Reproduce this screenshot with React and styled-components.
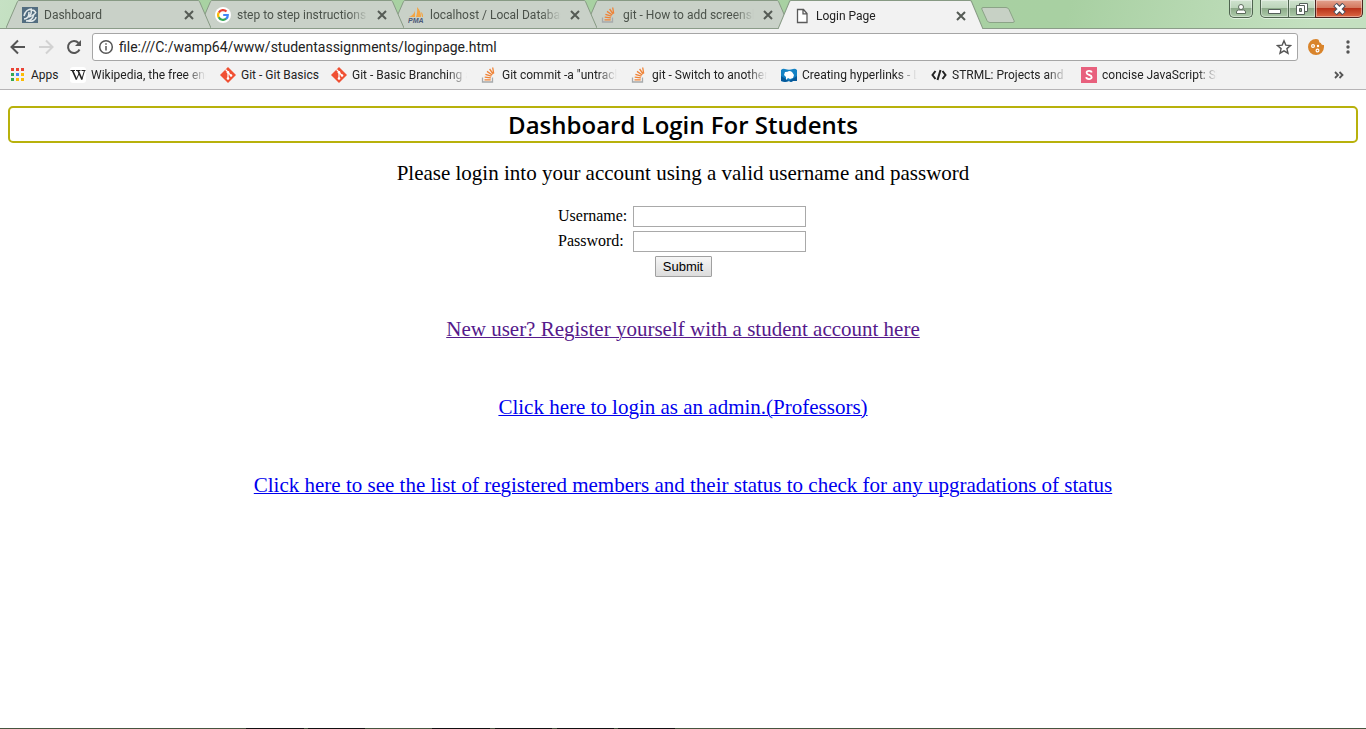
import React from "react";
import styled, { createGlobalStyle, css } from "styled-components";

const Global = createGlobalStyle`
  *, *::before, *::after { box-sizing: border-box; }
  body { margin: 0; background: #fff; }
  button { font: inherit; color: inherit; padding: 0; border: 0; background: none; }
`;

const Screen = styled.div`
  min-height: 100vh;
  display: flex;
  flex-direction: column;
  font: 12px/16px Roboto, sans-serif;
  color: #222;
`;

/* ---------- tab strip ---------- */
const TabStrip = styled.header`
  display: flex;
  justify-content: space-between;
  height: 29px;
  padding-left: 6px;
  border-bottom: 1px solid #8b9c89;
  background: linear-gradient(105deg, #c6e1c4 0, #a8d2a2 190px, #a8d0a2 78%, #c4e0c0 96%);
`;
const Tabs = styled.nav`
  display: flex;
  flex: 0 1 1040px;
  min-width: 0;
`;
const TabBox = styled.div`
  position: relative;
  z-index: ${(p) => p.$z};
  flex: 0 1 205px;
  min-width: 0;
  height: ${(p) => (p.$active ? 29 : 28)}px;
  margin-right: -12px;
  display: flex;
  color: ${(p) => (p.$active ? "#222" : "#4b524a")};
  --fill: ${(p) => (p.$active ? "#f2f2f2" : "#c9d1c8")};
`;
const TabEdge = styled.svg`
  flex: none;
  width: 13px;
  height: 100%;
  fill: var(--fill);
`;
const TabBody = styled.div`
  flex: 1;
  min-width: 0;
  display: flex;
  align-items: center;
  padding: 1px 4px 0 3px;
  background: var(--fill);
  border-top: 1px solid #879a84;
`;
const TabTitle = styled.a`
  flex: 1;
  min-width: 0;
  margin-left: 6px;
  overflow: hidden;
  white-space: nowrap;
  color: inherit;
  text-decoration: none;
  mask-image: linear-gradient(to left, transparent 0, #000 20px);
`;
const TabClose = styled.button`
  display: flex;
  width: 10px;
  margin-left: 9px;
  svg { width: 10px; height: 10px; stroke: #555b55; stroke-width: 2; }
`;
const NewTab = styled.button`
  display: flex;
  flex: none;
  margin: 6px 0 0 9px;
  svg { width: 36px; height: 18px; fill: #c7d1c5; stroke: #8ba387; }
`;
const WindowButtons = styled.div`
  display: flex;
  flex: none;
  height: 18px;
  padding-right: 3px;
`;
const winLook = css`
  display: flex;
  align-items: center;
  justify-content: center;
  height: 18px;
  border: 1px solid #4f6450;
  border-top: 0;
  box-shadow: inset 0 0 0 1px #ffffff66, 0 1px 0 #e0f0de;
  background: linear-gradient(#d0e3cf 0, #bdd5bb 45%, #8eac8b 50%, #adcba9 100%);
`;
const WinButton = styled.button`
  ${winLook}
  width: ${(p) => p.$w}px;
  margin-left: ${(p) => (p.$apart ? 0 : -1)}px;
  border-radius: ${(p) => p.$r};
  ${(p) => p.$apart && css`margin-right: 8px;`}
  ${(p) =>
    p.$danger &&
    css`
      border-color: #4d2420;
      background: linear-gradient(#e3a38f 0, #d4795f 45%, #b9331a 50%, #dc6844 100%);
    `}
`;

/* ---------- address bar ---------- */
const AddressRow = styled.div`
  display: flex;
  align-items: center;
  height: 36px;
  padding: 0 10px;
  background: #f2f2f2;
`;
const IconButton = styled.button`
  display: flex;
  flex: none;
  margin-left: ${(p) => p.$before || 0}px;
  margin-right: ${(p) => p.$gap || 0}px;
`;
const UrlBox = styled.div`
  display: flex;
  align-items: center;
  flex: 1;
  min-width: 0;
  height: 28px;
  padding: 0 5px;
  border: 1px solid #a6a6a6;
  border-radius: 3px;
  background: #fff;
`;
const UrlInput = styled.input`
  flex: 1;
  min-width: 0;
  margin-left: 5px;
  padding: 0;
  border: 0;
  outline: 0;
  background: none;
  font: 14px/20px Roboto, sans-serif;
  color: #222;
`;

/* ---------- bookmarks ---------- */
const BookmarkBar = styled.nav`
  display: flex;
  align-items: center;
  gap: 14px;
  height: 25px;
  padding: 0 22px 4px 10px;
  border-bottom: 1px solid #b6b4b6;
  background: #f2f2f2;
`;
const Bookmark = styled.a`
  display: flex;
  align-items: center;
  gap: 5px;
  color: #222;
  text-decoration: none;
  white-space: nowrap;
  svg { flex: none; }
`;
const BookmarkLabel = styled.span`
  width: ${(p) => p.$w}px;
  ${(p) =>
    p.$w > 100 &&
    css`
      overflow: hidden;
      mask-image: linear-gradient(to left, transparent 0, #000 20px);
    `}
`;
const More = styled.button`
  display: flex;
  margin-left: auto;
`;

/* ---------- page ---------- */
const Page = styled.main`
  flex: 1;
  display: flex;
  flex-direction: column;
  align-items: center;
  padding: 16px 8px;
  font: 16px/19px "Liberation Serif", serif;
  color: #000;
`;
const Heading = styled.h1`
  align-self: stretch;
  margin: 0 0 18px;
  border: 2px solid #b8b10c;
  border-radius: 5px;
  font: 600 24px/33px "Comic Sans MS", "Open Sans", sans-serif;
  text-align: center;
`;
const Intro = styled.p`
  margin: 0 0 21px;
  font-size: 21px;
  line-height: 24px;
`;
const Form = styled.form`
  display: flex;
  flex-direction: column;
  align-items: center;
  gap: 4px;
  margin-bottom: 40px;
`;
const Field = styled.div`
  display: grid;
  grid-template-columns: 75px 175px;
  align-items: center;
`;
const Label = styled.label`
  padding-bottom: 2px;
`;
const TextInput = styled.input`
  width: 173px;
  height: 21px;
  padding: 1px 2px;
  border: 1px solid #a9a9a9;
  border-radius: 0;
  font: 13px "Liberation Sans", sans-serif;
`;
const Submit = styled.button`
  && {
    width: 57px;
    height: 21px;
    border: 1px solid #a0a0a0;
    border-radius: 1px;
    background: linear-gradient(#f6f6f6, #dcdcdc);
    font: 13px/17px "Liberation Sans", sans-serif;
  }
`;
const PageLink = styled.a`
  margin-bottom: 54px;
  font-size: 21px;
  line-height: 24px;
  color: ${(p) => (p.$visited ? "#551a8b" : "#0000ee")};
  text-decoration: underline;
  text-decoration-thickness: 1px;
`;
const TaskbarEdge = styled.footer`
  height: 1px;
  background: linear-gradient(
    90deg,
    #46553f 246px, #111 246px 304px, #46553f 304px 308px, #111 308px 365px,
    #46553f 365px 432px, #111 432px 490px, #46553f 490px 495px, #111 495px 552px,
    #46553f 552px 557px, #111 557px 614px, #46553f 614px 618px, #111 618px 675px, #46553f 675px
  );
`;

/* ---------- drawings ---------- */
const Cross = () => (
  <svg viewBox="0 0 10 10"><path d="M1 1l8 8M9 1L1 9" /></svg>
);
const Drawing = styled.svg`
  flex: none;
  width: 16px;
  height: 16px;
`;
const Icon = ({ children, ...rest }) => (
  <Drawing viewBox="0 0 16 16" fill="none" {...rest}>{children}</Drawing>
);
const DashIcon = () => (
  <Icon>
    <path fill="#526d80" d="M0 0h16v16H0z" />
    <g stroke="#e2e9ea" strokeWidth="1.5">
      <path d="M2 9c1-4 4-7 8-7M2 12c4 0 5-3 5-7M4 14c4 0 7-3 8-7M7 10c3-1 6-3 7-5M6 14c4 1 8-1 8-4M9 2c1 3 0 6-3 8M10 3c2 0 3 1 4 3" />
    </g>
  </Icon>
);
const GoogleIcon = () => (
  <Icon>
    <circle cx="8" cy="8" r="8" fill="#fff" />
    <g strokeWidth="2.2">
      <path stroke="#ea4335" d="M3.8 5.6A4.8 4.8 0 0 1 11.5 4.6" />
      <path stroke="#fbbc05" d="M3.8 5.5a4.8 4.8 0 0 0 0 5" />
      <path stroke="#34a853" d="M3.7 10.2a4.8 4.8 0 0 0 7.4 1.5" />
      <path stroke="#4285f4" d="M8.2 8h4.6c.1 1.5-.6 2.9-1.8 3.9" />
    </g>
  </Icon>
);
const PmaIcon = () => (
  <Icon>
    <path fill="#f3a544" d="M7 1C7.5 4 6 8 1 10h6zM9 0c3 3 4 6 4 10H8c1-3 1.500-6 1-10zM13 5c2 1 2 3 2 5h-1z" />
    <text x="0" y="16" fill="#4c5878" fontFamily="Liberation Sans" fontWeight="700" fontStyle="italic" fontSize="7">PMA</text>
  </Icon>
);
const StackIcon = () => (
  <Icon>
    <path stroke="#a7a9ab" strokeWidth="1.3" d="M1.500 10.500v4.500h10v-4.500" />
    <path stroke="#ef8236" strokeWidth="1.3" d="M3.500 12.800h6.200M3.700 10.200l6.200.7M4.400 7.300l6 1.900M6 4.400l5.200 3.600M8.600 2l3.600 5M11.700.500l1 6" />
  </Icon>
);
const FileIcon = () => (
  <Icon stroke="#5a5a5a" strokeWidth="1.3">
    <path fill="#fff" d="M3.500 1.500h6l3.500 4v9h-9.500zM9 1.500v4.300h4" />
  </Icon>
);
const AppsIcon = () => (
  <Icon>
    {["#ea4335", "#ea4335", "#ea4335", "#34a853", "#4285f4", "#fbbc05", "#34a853", "#fbbc05", "#fbbc05"].map((c, i) => (
      <rect key={i} x={1 + (i % 3) * 5} y={1 + Math.floor(i / 3) * 5} width="3" height="3" fill={c} />
    ))}
  </Icon>
);
const WikiIcon = () => (
  <Icon>
    <rect width="16" height="16" rx="3" fill="#fff" />
    <path stroke="#222" d="M.5 3.500h4.500M6 3.500h4.500M11.500 3.500h4" />
    <path stroke="#222" strokeWidth="1.700" d="M2.500 3.500l4 9M8 3.500l4 9" />
    <path stroke="#222" strokeWidth="1" d="M6.300 12.500l3-6.500M11.800 12.500l2.700-9" />
  </Icon>
);
const GitIcon = () => (
  <Icon>
    <path fill="#f05033" d="M8 0l8 8-8 8-8-8z" />
    <path stroke="#fff" strokeWidth="1.2" d="M5.500 2.500L8 5v6.500M8 5.500L11 8.500" />
    <g fill="#fff"><circle cx="8" cy="5.200" r="1.300" /><circle cx="8" cy="11.500" r="1.300" /><circle cx="11" cy="8.500" r="1.300" /></g>
  </Icon>
);
const LinkSiteIcon = () => (
  <Icon>
    <path fill="#1482c4" d="M0 3q2-2 4-1 4 1.500 8 0 2-1 4 1v11h-4l-2 1-2-1-4 1-4-1z" />
    <path fill="#06599a" d="M0 9l8 5 8-5v5h-4l-2 1-2-1-4 1-4-1z" />
    <path fill="#fff" d="M4 5q3 0 4-1 2 0 3 1l2 3-1 3-3 1-2-1-2 2v-3l-2-2z" />
  </Icon>
);
const CodeIcon = () => (
  <Icon stroke="#222" strokeWidth="2"><path d="M4.500 4L1.500 8l3 4M11.500 4l3 4-3 4M9.500 3l-3 10" /></Icon>
);
const SIcon = () => (
  <Icon>
    <path fill="#e8607d" d="M0 0h16v16H0z" />
    <path stroke="#fff" strokeWidth="1.8" d="M10.700 5.500C10.300 3.400 5.600 3.300 5.600 5.700 5.600 8.300 10.700 7.500 10.700 10.200 10.700 12.700 5.500 12.600 5.200 10.200" />
  </Icon>
);

const tabs = [
  ["Dashboard", DashIcon],
  ["step to step instructions o", GoogleIcon],
  ["localhost / Local Databas", PmaIcon],
  ["git - How to add screensh", StackIcon],
  ["Login Page", FileIcon],
];
const bookmarks = [
  ["Apps", AppsIcon, 25],
  ["Wikipedia, the free enc", WikiIcon, 115],
  ["Git - Git Basics", GitIcon, 76],
  ["Git - Basic Branching an", GitIcon, 115],
  ['Git commit -a "untrack', StackIcon, 115],
  ["git - Switch to another", StackIcon, 115],
  ["Creating hyperlinks - L", LinkSiteIcon, 115],
  ["STRML: Projects and W", CodeIcon, 115],
  ["concise JavaScript: Slid", SIcon, 115],
];

function Tab({ title, Pic, active, z }) {
  return (
    <TabBox $active={active} $z={z}>
      <TabEdge viewBox="0 0 13 28" preserveAspectRatio="none">
        <path d="M0 28L11.500 1.500Q12 .500 13 .500V28z" />
        <path d="M0 28L11.500 1.500Q12 .500 13 .500" fill="none" stroke="#879a84" />
      </TabEdge>
      <TabBody>
        <Pic />
        <TabTitle href="#">{title}</TabTitle>
        <TabClose aria-label="Close tab"><Cross /></TabClose>
      </TabBody>
      <TabEdge viewBox="0 0 13 28" preserveAspectRatio="none">
        <path d="M13 28L1.500 1.500Q1 .500 0 .500V28z" />
        <path d="M13 28L1.500 1.500Q1 .500 0 .500" fill="none" stroke="#879a84" />
      </TabEdge>
    </TabBox>
  );
}

export default function App() {
  return (
    <Screen>
      <Global />
      <TabStrip>
        <Tabs>
          {tabs.map(([title, Pic], i) => (
            <Tab key={title} title={title} Pic={Pic} active={i === 4} z={i === 4 ? 9 : 5 - i} />
          ))}
          <NewTab aria-label="New tab">
            <svg viewBox="0 0 36 18"><path d="M3 1.500h23q2 0 3 2l5 11q1 2-1 2H10q-2 0-3-2L2 3.500q-1-2 1-2z" /></svg>
          </NewTab>
        </Tabs>
        <WindowButtons>
          <WinButton $w={24} $r="0 0 5px 5px" $apart aria-label="Profile">
            <svg width="10" height="12" viewBox="0 0 10 12" fill="#fff" stroke="#5b6b5b"><circle cx="5" cy="4" r="2.500" /><path d="M.5 10.500V9q0-2 2-2h5q2 0 2 2v1.500z" /></svg>
          </WinButton>
          <WinButton $w={29} $r="0 0 0 5px" aria-label="Minimize">
            <svg width="13" height="12" viewBox="0 0 13 12" fill="#fff" stroke="#55605a"><path d="M.5 6.500h12v4H.5z" /></svg>
          </WinButton>
          <WinButton $w={28} $r="0" aria-label="Restore">
            <svg width="12" height="12" viewBox="0 0 12 12" fill="#fff" stroke="#55605a"><path d="M3.500.5h8v8h-8z" /><path d="M.5 2.500h8v9h-8z" /><path d="M3.500 5.500h2v3h-2z" fill="#8eac8b" /></svg>
          </WinButton>
          <WinButton $w={48} $r="0 0 5px 0" $danger aria-label="Close">
            <svg width="13" height="12" viewBox="0 0 13 12"><path d="M2 1.500l9 9M11 1.500l-9 9" stroke="#4a4f5c" strokeWidth="5" /><path d="M2.500 2l8 8M10.500 2l-8 8" stroke="#fff" strokeWidth="2.800" /></svg>
          </WinButton>
        </WindowButtons>
      </TabStrip>

      <AddressRow>
        <IconButton $gap={12} aria-label="Back"><Icon stroke="#555" strokeWidth="2"><path d="M15 8H2M8 1.500L1.500 8 8 14.500" /></Icon></IconButton>
        <IconButton $gap={12} aria-label="Forward"><Icon stroke="#d2d2d2" strokeWidth="2"><path d="M1 8h13M8 1.500L14.500 8 8 14.500" /></Icon></IconButton>
        <IconButton $gap={10} aria-label="Reload"><Icon stroke="#555" strokeWidth="2"><path d="M13.500 10.500A6 6 0 1 1 12.500 4" /><path d="M15 1v6H9z" fill="#555" stroke="none" /></Icon></IconButton>
        <UrlBox>
          <Icon stroke="#555" strokeWidth="1.5"><circle cx="8" cy="8" r="6.300" /><path d="M8 7v4.500M8 4.200v1.600" /></Icon>
          <UrlInput aria-label="Address" defaultValue="file:///C:/wamp64/www/studentassignments/loginpage.html" />
          <IconButton aria-label="Bookmark this page"><Icon stroke="#555" strokeWidth="1.4"><path d="M8 1.800l1.800 4.300 4.700.4-3.600 3.100 1.100 4.600L8 11.800l-4 2.400 1.100-4.600L1.500 6.500l4.700-.4z" /></Icon></IconButton>
        </UrlBox>
        <IconButton $before={10} $gap={16} aria-label="Cookies">
          <Icon><path fill="#d9842b" d="M8 0q3 0 3 2 0 2 2 2 0 2 3 2v2a8 8 0 1 1-8-8z" /><g stroke="#fff" strokeWidth="1.2"><circle cx="5" cy="7" r="1.400" /><circle cx="9.500" cy="11.500" r="1.400" /><circle cx="10" cy="7" r=".6" /></g></Icon>
        </IconButton>
        <IconButton aria-label="Menu"><Icon><g fill="#555"><circle cx="8" cy="3" r="1.700" /><circle cx="8" cy="8" r="1.700" /><circle cx="8" cy="13" r="1.700" /></g></Icon></IconButton>
      </AddressRow>

      <BookmarkBar>
        {bookmarks.map(([label, Pic, w]) => (
          <Bookmark href="#" key={label}><Pic /><BookmarkLabel $w={w}>{label}</BookmarkLabel></Bookmark>
        ))}
        <More aria-label="More bookmarks"><svg width="10" height="8" viewBox="0 0 10 8" fill="none" stroke="#555" strokeWidth="1.800"><path d="M1 1l3 3-3 3M5.500 1l3 3-3 3" /></svg></More>
      </BookmarkBar>

      <Page>
        <Heading>Dashboard Login For Students</Heading>
        <Intro>Please login into your account using a valid username and password</Intro>
        <Form onSubmit={(e) => e.preventDefault()}>
          <Field><Label htmlFor="user">Username:</Label><TextInput id="user" type="text" /></Field>
          <Field><Label htmlFor="pass">Password:</Label><TextInput id="pass" type="password" /></Field>
          <Submit type="submit">Submit</Submit>
        </Form>
        <PageLink href="#" $visited>New user? Register yourself with a student account here</PageLink>
        <PageLink href="#">Click here to login as an admin.(Professors)</PageLink>
        <PageLink href="#">Click here to see the list of registered members and their status to check for any upgradations of status</PageLink>
      </Page>
      <TaskbarEdge />
    </Screen>
  );
}
